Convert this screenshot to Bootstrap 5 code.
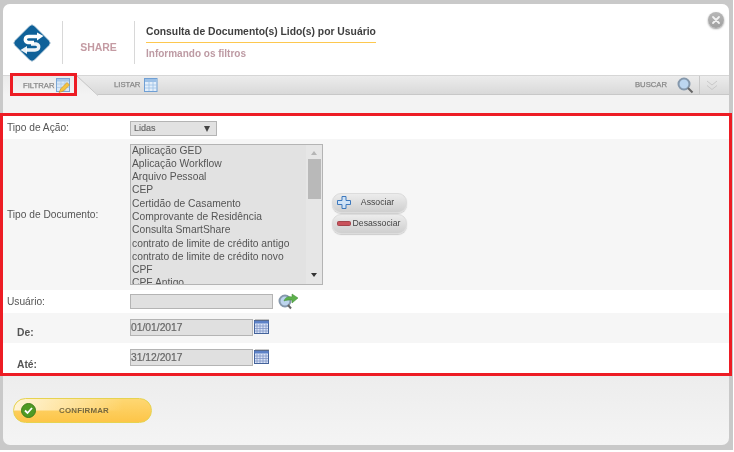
<!DOCTYPE html>
<html lang="pt"><head><meta charset="utf-8"><title>Consulta</title>
<link href="https://cdn.jsdelivr.net/npm/bootstrap@5.3.0/dist/css/bootstrap.min.css" rel="stylesheet">
<style>
html,body{margin:0;height:452px;overflow:hidden;background:#fff;font-family:"Liberation Sans",Arial,sans-serif;color:#555}
.frame{width:733px;height:450px;background:#c9c9c9;padding:4px 4px 5px 3px;position:relative;filter:blur(.35px)}
.shell{width:726px;height:441px;border-radius:7px;background:linear-gradient(#e2e2e2 60%,#f4f4f4);position:relative}
.head-zone{height:71px;background:#fff;border-radius:7px 7px 0 0;padding-top:17px}
.logo-cell{width:59px;height:43px;padding-left:8px}
.vrule{width:1px;height:43px;background:#d8d8d8}
.share-cell{width:71px;font-size:10.5px;font-weight:700;color:#c49ba3;letter-spacing:-.1px}
.title-cell{margin-left:11px}
.doc-title{font-size:10.35px;font-weight:700;color:#3f3f3f;line-height:13px;padding:4px 0;border-bottom:1px solid #fdc84f;width:230px;white-space:nowrap}
.doc-sub{font-size:10px;font-weight:700;color:#bd9aa3;margin-top:5px;line-height:12px}
.close-x{position:absolute;right:5px;top:8px;width:16px;height:16px;border-radius:50%;background:linear-gradient(#b8b8b8,#a0a0a0);box-shadow:0 1px 2px #999;display:flex;align-items:center;justify-content:center}
.tab-zone{height:20px;background:linear-gradient(#ececec,#d9d9d9);border-top:1px solid #d6d6d6;border-bottom:1px solid #c8c8c8;position:relative}
.tab-text{font-size:7.7px;color:#888;-webkit-text-stroke:.25px #888}
.tab-active{width:95px;height:19px;margin-bottom:-1px;position:relative;padding-left:20px;gap:2px;background:linear-gradient(#ebebeb,#f3f3f3);clip-path:polygon(0 0,74px 0,95px 100%,0 100%)}
.tab-diag{position:absolute;left:73px;top:0;z-index:1}
.tab-next{padding-left:16px;gap:4px}
.tab-right{gap:10px}
.sep-cell{width:30px;height:18px;border-left:1px solid #c8c8c8;margin-left:-5px;padding-left:6px}
.strip{height:18px;background:#f3f3f3}
.mark-a{position:absolute;left:10px;top:73px;width:67px;height:23px;border:3px solid #ed1c24;z-index:5}
.form-zone{border:3px solid #ed1c24;margin-left:-3px;width:732px;height:263px;padding-top:1px;background:#fff;position:relative}
.frow{display:flex;font-size:10.2px;color:#555}
.lab{width:127px;padding-left:4px;flex:none}
.w{background:#fff}.g{background:#f6f6f6}
.r1{height:22px;align-items:center}
.r2{height:151px;align-items:center}
.r3{height:23px;align-items:center}
.r4,.r5{height:30px}
.ind{padding-left:14px;font-weight:700;color:#555;padding-top:12px;font-size:10.3px}
.r5 .ind{padding-top:14px}
.fake-select{width:87px;height:15px;background:#e2e2e2;border:1px solid #b4b4b4;font-size:9px;display:flex;justify-content:space-between;align-items:center;padding:1px 6px 0 3px;color:#666;-webkit-text-stroke:.15px #666}
.arrow-d{width:0;height:0;border-left:3.5px solid transparent;border-right:3.5px solid transparent;border-top:6px solid #444}
.listbox{width:193px;height:141px;background:#e2e2e2;border:1px solid #b4b4b4;display:flex;overflow:hidden;color:#555;font-size:10.3px;margin-top:-1px}
.opts{flex:1;padding-left:1px;overflow:hidden;margin-top:-1px}
.opts div{height:13.3px;line-height:13px;white-space:nowrap}
.sb{width:16px;background:#e6e6e6;display:flex;flex-direction:column;align-items:center;position:relative}
.thumb{width:13px;height:40px;background:#b9b9b9;margin-top:4px}
.up{margin-top:6px;width:0;height:0;border-left:3px solid transparent;border-right:3px solid transparent;border-bottom:4px solid #b5b5b5}
.down{position:absolute;bottom:7px;width:0;height:0;border-left:3.5px solid transparent;border-right:3.5px solid transparent;border-top:4px solid #333}
.act-col{margin-left:9px;gap:1px;margin-top:-3px}
.act{width:75px;height:20px;border:1px solid #dcdcdc;border-radius:9px;background:linear-gradient(#ececec,#cfcfcf);font-size:8.7px;color:#444;display:flex;align-items:center;padding:0 0 0 4px;box-shadow:0 1px 1px #ccc}
.act span{flex:1;text-align:center;padding-right:2px}
.act-minus span{padding-right:4px}
.inp-user{width:143px;height:15px;background:#e0e0e0;border:1px solid #b4b4b4}
.inp-date{width:123px;height:17px;background:#e0e0e0;border:1px solid #b4b4b4;font-size:10.3px;color:#666;-webkit-text-stroke:.2px #666;line-height:15px}
.date-pad{padding-top:6px;gap:1px}
.foot-zone{padding:22px 0 0 10px}
.confirm{width:139px;height:25px;border:1.5px solid #e6d350;border-radius:13px;background:linear-gradient(90deg,rgba(255,246,220,.95),rgba(255,246,220,0) 80%) top/100% 50% no-repeat,linear-gradient(#fed772,#fdc548);padding:0 0 0 7px;font-size:7.9px;font-weight:700;color:#76683f;letter-spacing:.2px}
.confirm span{margin-left:23px}
svg{display:block;flex:none}
</style></head><body>
<div class="frame">
<div class="shell">
  <div class="head-zone d-flex">
    <div class="logo-cell d-flex align-items-center">
      <svg width="42" height="42" viewBox="0 0 42 42"><rect x="7.200" y="7.200" width="27.600" height="27.600" rx="3.500" transform="rotate(45 21 21)" fill="#0f6199" stroke="#c6d6e0" stroke-width=".8"/><path d="M27 14.500H18C13.500 14.500 13 19.500 17 20.500H23" fill="none" stroke="#fff" stroke-width="3.400"/><path d="M26 10.500 32.500 14 26 18.500Z" fill="#fff"/><path d="M15 28H24C28.500 28 29 23 25 22H20" fill="none" stroke="#fff" stroke-width="3.400" opacity=".92"/><path d="M16 24 9.500 28 16 32Z" fill="#fff" opacity=".92"/></svg>
    </div>
    <div class="vrule"></div>
    <div class="share-cell d-flex align-items-center justify-content-center">SHARE</div>
    <div class="vrule"></div>
    <div class="title-cell">
      <div class="doc-title">Consulta de Documento(s) Lido(s) por Usuário</div>
      <div class="doc-sub">Informando os filtros</div>
    </div>
  </div>
  <div class="close-x"><svg width="10" height="10" viewBox="0 0 10 10"><path d="M2 2 8 8M8 2 2 8" stroke="#f2f2f2" stroke-width="1.800" stroke-linecap="round"/></svg></div>
  <div class="tab-zone d-flex justify-content-between">
    <div class="d-flex">
      <div class="tab-active d-flex align-items-center"><span class="tab-text">FILTRAR</span>
        <svg width="15" height="15" viewBox="0 0 15 15"><rect x=".5" y=".5" width="13" height="13" fill="#d8e8f8" stroke="#7aa6d6"/><rect x="1" y="1" width="12" height="2.500" fill="#a8c8ea"/><path d="M1 6H13M1 9.500H13M5 3V13M9 3V13" stroke="#a8c6e6" stroke-width=".7"/><path d="M3 14.500 5 10.500 11 4.500 13.500 7 7.500 13Z" fill="#f4c542" stroke="#c98a22" stroke-width=".6"/></svg></div>
      <svg class="tab-diag" width="24" height="20" viewBox="0 0 24 20"><path d="M1 0 22 19.500" stroke="#c4c4c4" fill="none"/></svg>
      <div class="tab-next d-flex align-items-center"><span class="tab-text">LISTAR</span>
        <svg width="14" height="14" viewBox="0 0 14 14"><rect x=".5" y=".5" width="12.500" height="13" fill="#e3eefa" stroke="#6f9fd4"/><rect x="1" y="1" width="11.500" height="3" fill="#9cc0e6"/><path d="M1 7H13M1 10H13M5 4V13M9 4V13" stroke="#9cc0e6" stroke-width=".8"/></svg></div>
    </div>
    <div class="d-flex align-items-center tab-right">
      <span class="tab-text">BUSCAR</span>
      <svg width="17" height="17" viewBox="0 0 17 17"><circle cx="7" cy="7" r="5.500" fill="#bcd6f0" stroke="#8598ac" stroke-width="2"/><path d="M11 11 15.500 15.500" stroke="#666" stroke-width="2"/></svg>
      <div class="sep-cell d-flex align-items-center"><svg width="12" height="11" viewBox="0 0 12 11"><path d="M1 1 6 5 11 1M1 5.500 6 9.500 11 5.500" fill="none" stroke="#c9c9c9"/></svg></div>
    </div>
  </div>
  <div class="strip"></div>
  <div class="form-zone">
    <div class="frow w r1"><div class="lab">Tipo de Ação:</div>
      <div class="fake-select"><span>Lidas</span><i class="arrow-d"></i></div></div>
    <div class="frow g r2"><div class="lab">Tipo de Documento:</div>
      <div class="listbox"><div class="opts">
        <div>Aplicação GED</div><div>Aplicação Workflow</div><div>Arquivo Pessoal</div><div>CEP</div><div>Certidão de Casamento</div><div>Comprovante de Residência</div><div>Consulta SmartShare</div><div>contrato de limite de crédito antigo</div><div>contrato de limite de crédito novo</div><div>CPF</div><div>CPF Antigo</div>
      </div><div class="sb"><i class="up"></i><div class="thumb"></div><i class="down"></i></div></div>
      <div class="act-col d-flex flex-column">
        <div class="act"><svg width="14" height="13" viewBox="0 0 14 13"><path d="M5 .5H9V4.500H13.500V8.500H9V12.500H5V8.500H.5V4.500H5Z" fill="#cfe2f6" stroke="#3d78bd"/></svg><span>Associar</span></div>
        <div class="act act-minus"><svg width="14" height="5" viewBox="0 0 14 5"><rect x=".5" y=".5" width="13" height="4" rx="1" fill="#c9525b" stroke="#a3454c"/></svg><span>Desassociar</span></div>
      </div></div>
    <div class="frow w r3"><div class="lab">Usuário:</div><div class="inp-user"></div>
      <svg class="ms-1" width="22" height="17" viewBox="0 0 22 17"><circle cx="8" cy="8" r="5.500" fill="#bcd4ee" stroke="#8598ac" stroke-width="2"/><path d="M11 12 14 15.500" stroke="#666" stroke-width="2"/><path d="M7 8C8 4 12 3 15 4V1L21 5 15 10V7C12 7 9 7 7 8Z" fill="#5db04b" stroke="#3c8a34" stroke-width=".5"/></svg></div>
    <div class="frow g r4"><div class="lab ind">De:</div><div class="d-flex date-pad"><div class="inp-date">01/01/2017</div>
      <svg width="16" height="15" viewBox="0 0 16 15"><rect x=".5" y="1.500" width="14" height="13" fill="#dbe4f7" stroke="#44639b"/><rect x=".5" y="2" width="14" height="2.500" fill="#5d82c8"/><path d="M2 0V2M4 0V2M6 0V2M8 0V2M10 0V2M12 0V2M14 0V2" stroke="#777" stroke-width=".8"/><path d="M3 5V14M6 5V14M9 5V14M12 5V14M1 7H14M1 9.500H14M1 12H14" stroke="#7f94c6" stroke-width=".8"/></svg></div></div>
    <div class="frow w r5"><div class="lab ind">Até:</div><div class="d-flex date-pad"><div class="inp-date">31/12/2017</div>
      <svg width="16" height="15" viewBox="0 0 16 15"><rect x=".5" y="1.500" width="14" height="13" fill="#dbe4f7" stroke="#44639b"/><rect x=".5" y="2" width="14" height="2.500" fill="#5d82c8"/><path d="M2 0V2M4 0V2M6 0V2M8 0V2M10 0V2M12 0V2M14 0V2" stroke="#777" stroke-width=".8"/><path d="M3 5V14M6 5V14M9 5V14M12 5V14M1 7H14M1 9.500H14M1 12H14" stroke="#7f94c6" stroke-width=".8"/></svg></div></div>
  </div>
  <div class="foot-zone"><div class="confirm d-flex align-items-center">
    <svg width="15" height="15" viewBox="0 0 15 15"><circle cx="7.500" cy="7.500" r="7" fill="#4f9a24" stroke="#3e7d1c"/><path d="M4 7.500 6.500 10 11 5" fill="none" stroke="#fff" stroke-width="1.800"/></svg><span>CONFIRMAR</span></div></div>
</div>
<div class="mark-a"></div>
</div>
</body></html>
